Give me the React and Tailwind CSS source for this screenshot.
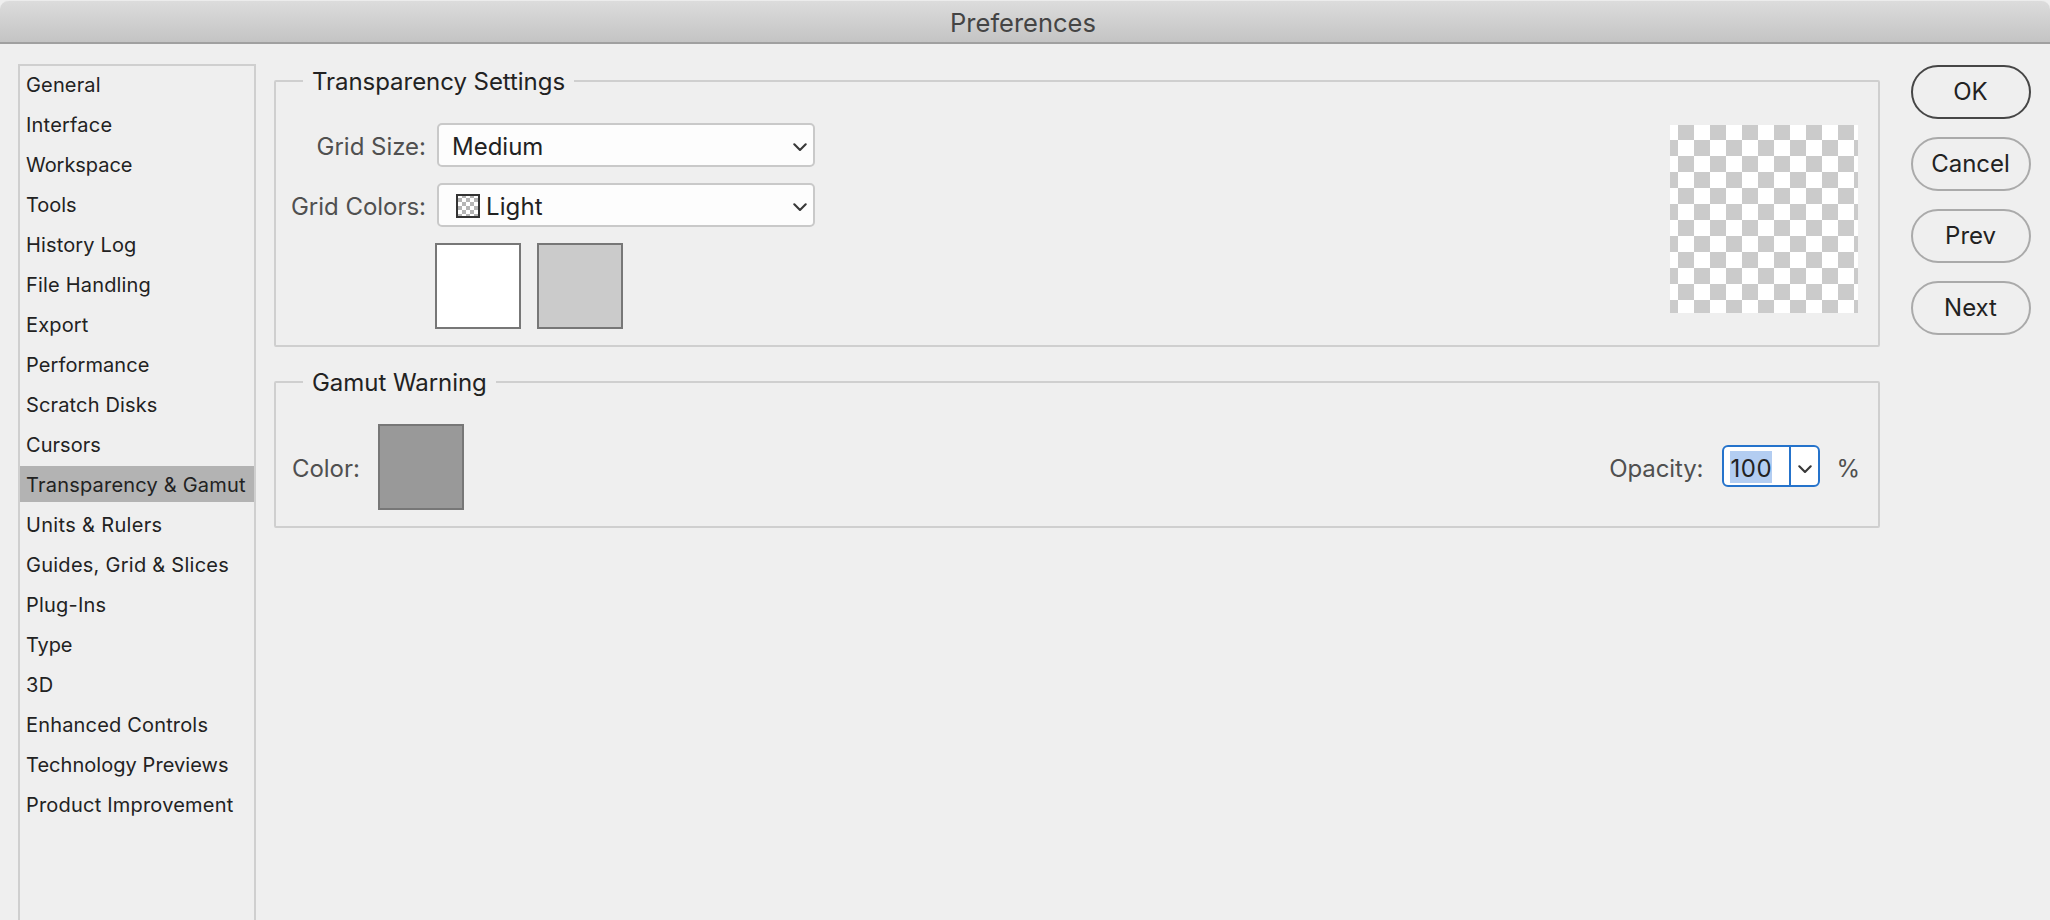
import { useState } from "react";

const SECTIONS = [
    { name: "General", tracking: "tracking-[0.15px]" },
    { name: "Interface", tracking: "tracking-[0.2px]" },
    { name: "Workspace", tracking: "tracking-[-0.05px]" },
    { name: "Tools", tracking: "tracking-[-0.05px]" },
    { name: "History Log", tracking: "tracking-[0.14px]" },
    { name: "File Handling", tracking: "tracking-[0.18px]" },
    { name: "Export", tracking: "tracking-[0.15px]" },
    { name: "Performance", tracking: "tracking-[0.1px]" },
    { name: "Scratch Disks", tracking: "tracking-[0.15px]" },
    { name: "Cursors", tracking: "tracking-[0.05px]" },
    { name: "Transparency & Gamut", tracking: "tracking-[0.2px]" },
    { name: "Units & Rulers", tracking: "tracking-[0.33px]" },
    { name: "Guides, Grid & Slices", tracking: "tracking-[0.26px]" },
    { name: "Plug-Ins", tracking: "tracking-[0.2px]" },
    { name: "Type", tracking: "tracking-[-0.1px]" },
    { name: "3D", tracking: "tracking-[0.3px]" },
    { name: "Enhanced Controls", tracking: "tracking-[0.17px]" },
    { name: "Technology Previews", tracking: "tracking-[0.05px]" },
    { name: "Product Improvement", tracking: "tracking-[0.2px]" },
];

const Chevron = () => (
    <svg width="14" height="9" viewBox="0 0 14 9" fill="none" className="shrink-0">
        <path d="M1.3 1.3 L7 7 L12.7 1.3" stroke="#383838" strokeWidth="2.1" strokeLinecap="round" strokeLinejoin="round" />
    </svg>
);

const Group = ({ title, className, children }) => (
    <fieldset className={`rounded-[2px] border-2 border-[#cfcfcf] ${className}`}>
        <legend className="ml-[27px] h-[34px] px-[9px] pt-px leading-[34px] tracking-[-0.05px] text-[#222]">{title}</legend>
        {children}
    </fieldset>
);

const SelectRow = ({ label, pad, children }) => (
    <div className="flex h-11">
        <label className="w-[161px] pr-[11px] pt-[3px] text-right leading-[41px] tracking-[-0.02px] text-[#505050]">{label}</label>
        <button className={`flex w-[378px] items-center justify-between rounded-[5px] border-2 border-[#c9c9c9] bg-[#fdfdfd] pr-[6px] text-[#222] ${pad}`}>
            {children}
            <span className="pt-[5px]"><Chevron /></span>
        </button>
    </div>
);

const Swatch = ({ color }) => (
    <div className={`size-[86px] shrink-0 border-2 border-[#777] ${color}`} />
);

const DialogButton = ({ primary, children }) => (
    <button className={`h-[54px] w-[120px] rounded-full border-2 pr-px tracking-[-0.05px] text-[#222] ${primary ? "border-[#464646]" : "border-[#aaa]"}`}>
        {children}
    </button>
);

const App = () => {
    const [active, setActive] = useState("Transparency & Gamut");

    return (
        <div className="flex h-screen flex-col overflow-hidden bg-[#efefef] font-['Inter','Liberation_Sans',sans-serif] text-[24px] text-[#222]">
            <header className="flex h-11 shrink-0 items-center justify-center rounded-t-[9px] border-t border-b-2 border-t-[#ececec] border-b-[#a0a0a0] bg-linear-to-b from-[#dcdcdc] to-[#c4c4c4] pt-[4px] text-[25.5px] text-[#444]">
                <h1 className="mr-[4px]">Preferences</h1>
            </header>

            <div className="flex min-h-0 flex-1 pt-5 pr-[19px] pl-[18px]">
                <nav className="flex w-[238px] shrink-0 flex-col gap-1 border-2 border-b-0 border-[#cfcfcf] text-[20px]">
                    {SECTIONS.map((s) => (
                        <button
                            key={s.name}
                            onClick={() => setActive(s.name)}
                            className={`h-9 shrink-0 pt-[2px] pl-[6px] text-left leading-[34px] whitespace-nowrap ${s.tracking} ${s.name === active ? "bg-[#b3b3b3]" : ""}`}
                        >
                            {s.name}
                        </button>
                    ))}
                </nav>

                <main className="ml-[18px] flex w-[1606px] flex-col gap-[18px]">
                    <Group title="Transparency Settings" className="h-[283px]">
                        <div className="flex justify-between pr-5 pt-[25px]">
                            <div className="flex flex-col gap-4">
                                <SelectRow label="Grid Size:" pad="pl-[13px]">
                                    <span className="pt-[3px]">Medium</span>
                                </SelectRow>
                                <SelectRow label="Grid Colors:" pad="pl-[17px]">
                                    <span className="flex items-center gap-[6px]">
                                        <span className="mt-[2px] size-6 border-2 border-[#333] bg-[repeating-conic-gradient(#b5b5b5_0_25%,#fff_0_50%)] bg-[length:8px_8px] bg-[position:0_-2px]" />
                                        <span className="pt-[3px] tracking-[0.1px]">Light</span>
                                    </span>
                                </SelectRow>
                                <div className="ml-[159px] flex gap-4">
                                    <Swatch color="bg-white" />
                                    <Swatch color="bg-[#cbcbcb]" />
                                </div>
                            </div>
                            <div className="mt-[2px] size-[188px] bg-[repeating-conic-gradient(#cbcbcb_0_25%,#fff_0_50%)] bg-[length:32px_32px] bg-[position:-8px_-1px]" />
                        </div>
                    </Group>

                    <Group title="Gamut Warning" className="h-[163px]">
                        <div className="flex items-center justify-between pt-[25px] pr-[18px] pl-4 text-[#505050]">
                            <div className="flex items-center gap-[18px]">
                                <label className="pt-[3px] tracking-[-0.05px]">Color:</label>
                                <Swatch color="bg-[#999]" />
                            </div>
                            <div className="flex items-center">
                                <label className="pt-[3px] tracking-[-0.1px]">Opacity:</label>
                                <div className="mr-[16px] mb-[2px] ml-[19px] flex h-[42px] w-[98px] rounded-[6px] border-2 border-[#2573cb] bg-white">
                                    <div className="flex flex-1 items-center pt-[2px] pl-[6px]">
                                        <span className="h-8 w-[42px] bg-[#b3cdf1] pt-px leading-[33px] tracking-[0.6px] text-[#222]">100</span>
                                    </div>
                                    <button className="flex w-[29px] items-center justify-center border-l-2 border-[#2573cb] pt-[7px]">
                                        <Chevron />
                                    </button>
                                </div>
                                <span className="pt-[3px]">%</span>
                            </div>
                        </div>
                    </Group>
                </main>

                <aside className="mt-px ml-auto flex flex-col gap-[18px]">
                    <DialogButton primary>OK</DialogButton>
                    <DialogButton>Cancel</DialogButton>
                    <DialogButton>Prev</DialogButton>
                    <DialogButton>Next</DialogButton>
                </aside>
            </div>
        </div>
    );
};

export default App;
